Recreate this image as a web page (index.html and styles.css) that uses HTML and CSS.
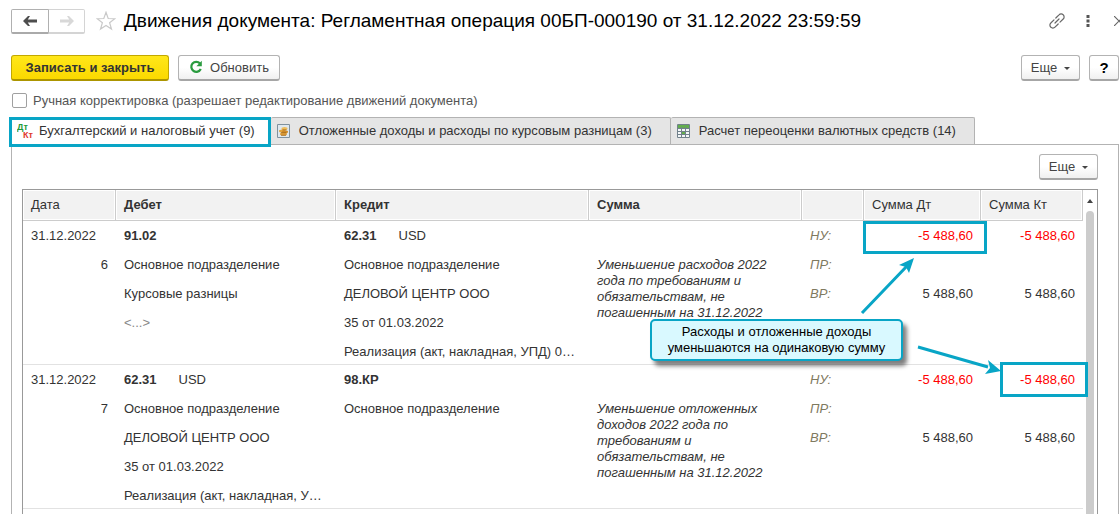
FILE: index.html
```html
<!DOCTYPE html>
<html lang="ru">
<head>
  <meta charset="UTF-8">
  <meta name="viewport" content="width=device-width, initial-scale=1.0">
  <title>Движения документа</title>
  <link rel="stylesheet" href="styles.css">
</head>
<body>
  <header class="titlebar">
    <div class="nav">
      <button type="button" class="nav-btn" aria-label="Назад">
        <svg width="14" height="10" viewBox="0 0 14 10"><path d="M0 5l5-5h2L4.800 3.500H14v3H4.800L7 10H5z" fill="#4d4d4d"/></svg>
      </button>
      <button type="button" class="nav-btn" aria-label="Вперед">
        <svg width="14" height="10" viewBox="0 0 14 10"><path d="M14 5L9 0H7l2.200 3.500H0v3h9.200L7 10h2z" fill="#d8d8d8"/></svg>
      </button>
    </div>
    <button type="button" class="icon-btn star" aria-label="В избранное">
      <svg width="20" height="20" viewBox="0 0 20 20"><path d="M10 1.300l2.200 6.200 6.600.2-5.200 4 1.900 6.400L10 14.400l-5.500 3.700 1.900-6.400-5.200-4 6.600-.2z" fill="#fff" stroke="#c9c9c9" stroke-width="1.200"/></svg>
    </button>
    <h1>Движения документа: Регламентная операция 00БП-000190 от 31.12.2022 23:59:59</h1>
    <div class="window-icons">
      <button type="button" class="icon-btn" aria-label="Ссылка">
        <svg width="16" height="16" viewBox="0 0 16 16" fill="none" stroke="#666" stroke-width="1.200" stroke-linecap="round"><path d="M6.800 5l3.200-3.200a2.900 2.900 0 0 1 4.200 0 2.900 2.900 0 0 1 0 4.200L11 9.200M9.200 11L6 14.200a2.900 2.900 0 0 1-4.200 0 2.900 2.900 0 0 1 0-4.200L5 6.800M6 10l4-4"/></svg>
      </button>
      <button type="button" class="icon-btn" aria-label="Меню">
        <svg width="4" height="12" viewBox="0 0 4 12" fill="#555"><path d="M.5 0h3v3h-3zM.5 4.500h3v3h-3zM.5 9h3v3h-3z"/></svg>
      </button>
      <button type="button" class="icon-btn" aria-label="Закрыть">
        <svg width="10" height="10" viewBox="0 0 10 10" stroke="#666" stroke-width="1.200"><path d="M0 0l10 10M10 0L0 10"/></svg>
      </button>
    </div>
  </header>

  <div class="toolbar">
    <button type="button" class="btn btn-primary">Записать и закрыть</button>
    <button type="button" class="btn btn-refresh">
      <svg width="14" height="14" viewBox="0 0 14 14"><path d="M11 3.400A5 5 0 1 0 11.800 9" fill="none" stroke="#2a9b3f" stroke-width="2.200"/><path d="M12.800.8v5.400H7.400z" fill="#2a9b3f"/></svg>
      Обновить
    </button>
    <button type="button" class="btn btn-more btn-right">Еще <span class="caret"></span></button>
    <button type="button" class="btn btn-help">?</button>
  </div>

  <label class="manual"><input type="checkbox">Ручная корректировка (разрешает редактирование движений документа)</label>

  <nav class="tabs">
    <button type="button" class="tab active">
      <svg width="18" height="18" viewBox="0 0 18 18" class="dtkt"><text x="0" y="8" fill="#1f9a3a">Дт</text><text x="6" y="16" fill="#e0382e">Кт</text></svg>
      Бухгалтерский и налоговый учет (9)
    </button>
    <button type="button" class="tab">
      <svg width="13" height="14" viewBox="0 0 13 14"><path d="M.5.500h12v13H.5z" fill="#dfe8ee" stroke="#7f919e"/><ellipse cx="7.500" cy="4.500" rx="3" ry="1.500" fill="#eebc58"/><ellipse cx="5" cy="7" rx="3" ry="1.500" fill="#e2a43c"/><ellipse cx="8" cy="7.800" rx="3" ry="1.500" fill="#cf8a28"/><ellipse cx="6.500" cy="10" rx="3.500" ry="1.500" fill="#dd9c38"/><path d="M5.500 5.800h4M4 8.600h5M4 11.300h5" stroke="#a3691d" stroke-width=".8"/></svg>
      Отложенные доходы и расходы по курсовым разницам (3)
    </button>
    <button type="button" class="tab">
      <svg width="13" height="14" viewBox="0 0 13 14"><path d="M.5.500h12v13H.5z" fill="#f4f7f8" stroke="#71818b"/><path d="M1 1h11v3H1zM5 8h3v2H5z" fill="#63ad4e"/><path d="M1 4.500h11M1 7.500h11M1 10.500h11M4.500 3v10M8.500 3v10" stroke="#71818b"/></svg>
      Расчет переоценки валютных средств (14)
    </button>
  </nav>

  <main class="panel">
    <div class="panel-bar">
      <button type="button" class="btn btn-more">Еще <span class="caret"></span></button>
    </div>
    <div class="grid">
      <table>
        <colgroup>
          <col class="c-date"><col class="c-debit"><col class="c-credit"><col class="c-sum"><col class="c-kind"><col class="c-dt"><col class="c-kt">
        </colgroup>
        <thead>
          <tr>
            <th class="light">Дата</th>
            <th>Дебет</th>
            <th>Кредит</th>
            <th>Сумма</th>
            <th></th>
            <th class="light">Сумма Дт</th>
            <th class="light">Сумма Кт</th>
          </tr>
        </thead>
        <tbody>
          <tr>
            <td><div class="lines"><span>31.12.2022</span><span class="num">6</span></div></td>
            <td><div class="lines"><span><b>91.02</b></span><span>Основное подразделение</span><span>Курсовые разницы</span><span class="empty">&lt;...&gt;</span></div></td>
            <td><div class="lines"><span><b>62.31</b><i class="cur">USD</i></span><span>Основное подразделение</span><span>ДЕЛОВОЙ ЦЕНТР ООО</span><span>35 от 01.03.2022</span><span>Реализация (акт, накладная, УПД) 0…</span></div></td>
            <td><p class="note">Уменьшение расходов 2022<br>года по требованиям и<br>обязательствам, не<br>погашенным на 31.12.2022</p></td>
            <td><div class="lines kind"><span>НУ:</span><span>ПР:</span><span>ВР:</span></div></td>
            <td class="marked mark-dt"><div class="lines amount"><span class="neg">-5 488,60</span><span></span><span>5 488,60</span></div></td>
            <td><div class="lines amount"><span class="neg">-5 488,60</span><span></span><span>5 488,60</span></div></td>
          </tr>
          <tr>
            <td><div class="lines"><span>31.12.2022</span><span class="num">7</span></div></td>
            <td><div class="lines"><span><b>62.31</b><i class="cur">USD</i></span><span>Основное подразделение</span><span>ДЕЛОВОЙ ЦЕНТР ООО</span><span>35 от 01.03.2022</span><span>Реализация (акт, накладная, У…</span></div></td>
            <td><div class="lines"><span><b>98.КР</b></span><span>Основное подразделение</span></div></td>
            <td><p class="note">Уменьшение отложенных<br>доходов 2022 года по<br>требованиям и<br>обязательствам, не<br>погашенным на 31.12.2022</p></td>
            <td><div class="lines kind"><span>НУ:</span><span>ПР:</span><span>ВР:</span></div></td>
            <td><div class="lines amount"><span class="neg">-5 488,60</span><span></span><span>5 488,60</span></div></td>
            <td class="marked mark-kt"><div class="lines amount"><span class="neg">-5 488,60</span><span></span><span>5 488,60</span></div></td>
          </tr>
        </tbody>
      </table>
      <div class="scrollbar"><span class="scroll-up"></span><span class="thumb"></span></div>

      <svg class="arrows" width="150" height="130" viewBox="0 0 150 130">
        <g stroke="#08a5c6" stroke-width="3" fill="none"><path d="M11 60L56 13M67 94L137 114"/></g>
        <g fill="#08a5c6"><path d="M63 5l-5 15-3-6-7-2z"/><path d="M150 118l-16 3 5-6-2-8z"/></g>
      </svg>
      <div class="callout">Расходы и отложенные доходы<br>уменьшаются на одинаковую сумму</div>
    </div>
  </main>
</body>
</html>
```
FILE: styles.css
```css
*,
*::after {
  box-sizing: border-box;
}

body {
  margin: 0;
  height: 100vh;
  overflow: hidden;
  display: flex;
  flex-direction: column;
  background: #fff;
  color: #333;
  font-family: "Liberation Sans", Arial, sans-serif;
  font-size: 13px;
}

button {
  font: inherit;
  color: inherit;
  padding: 0;
  white-space: nowrap;
}

svg {
  flex: none;
}

/* title */
.titlebar {
  display: flex;
  align-items: center;
  height: 24px;
  margin: 9px 0 22px 11px;
}

.nav {
  display: flex;
}

.nav-btn {
  display: flex;
  align-items: center;
  justify-content: center;
  width: 38px;
  height: 25px;
  background: #fff;
  border: 1px solid #b0b0b0;
  border-bottom: 2px solid #aaa;
  border-radius: 2px 0 0 2px;
}

.nav-btn + .nav-btn {
  width: 37px;
  margin-left: -1px;
  border-color: #d4d4d4;
  border-left-color: #b0b0b0;
  border-radius: 0 2px 2px 0;
}

.icon-btn {
  display: flex;
  border: none;
  background: none;
}

.star {
  margin-left: 11px;
}

h1 {
  margin: 0 0 0 8px;
  color: #000;
  font-size: 19px;
  font-weight: normal;
  line-height: 24px;
  white-space: nowrap;
}

.window-icons {
  display: flex;
  align-items: center;
  gap: 21px;
  margin-left: auto;
  margin-right: -4px;
}

.window-icons .icon-btn:last-child {
  margin-left: 3px;
}

/* buttons */
.toolbar {
  display: flex;
  gap: 9px;
  margin: 0 1px 11px 11px;
}

.btn {
  display: flex;
  align-items: center;
  justify-content: center;
  height: 26px;
  padding-bottom: 1px;
  color: #444;
  background: linear-gradient(#fff 50%, #f0f0f0);
  border: 1px solid #b3b3b3;
  border-bottom: 2px solid #a6a6a6;
  border-radius: 3px;
}

.btn-primary {
  width: 158px;
  color: #333;
  font-weight: bold;
  background: linear-gradient(#ffe71a, #fbd900);
  border-color: #c2a800;
  border-bottom-color: #ac9500;
}

.btn-refresh {
  width: 102px;
  gap: 7px;
}

.btn-more {
  width: 59px;
  gap: 7px;
}

.btn-right {
  margin-left: auto;
}

.btn-help {
  width: 30px;
  color: #000;
  font-size: 15px;
  font-weight: bold;
}

.caret {
  margin-top: 3px;
  border: 3px solid transparent;
  border-top-color: #444;
  border-bottom: none;
}

.manual {
  display: flex;
  align-items: center;
  gap: 6px;
  height: 16px;
  margin: 0 0 9px 12px;
  color: #555;
}

.manual input {
  appearance: none;
  width: 15px;
  height: 15px;
  margin: 0;
  border: 1px solid #a0a0a0;
  border-radius: 2px;
  background: #fff;
}

/* tabs */
.tabs {
  display: flex;
  margin-left: 11px;
}

.tab {
  position: relative;
  display: flex;
  align-items: center;
  gap: 9px;
  height: 27px;
  padding: 0 18px 1px 6px;
  background: #e5e5e5;
  border: 1px solid #b3b3b3;
  border-left: none;
  border-bottom: none;
  border-radius: 2px 2px 0 0;
}

.tab.active {
  gap: 4px;
  padding-right: 15px;
  background: #fff;
}

.tab.active::after {
  content: "";
  position: absolute;
  inset: -1px -1px -3px -2px;
  border: 3px solid #08a5c6;
}

.dtkt {
  font-size: 9px;
  font-weight: bold;
}

/* table */
.panel {
  flex: 1;
  display: flex;
  flex-direction: column;
  margin: 0 1px 0 11px;
  padding: 9px 20px 0 10px;
  border: 1px solid #b3b3b3;
  border-bottom: none;
  min-height: 0;
}

.panel-bar {
  display: flex;
  justify-content: flex-end;
  margin-bottom: 9px;
}

.grid {
  position: relative;
  flex: 1;
  display: flex;
  min-height: 0;
  border: 1px solid #999;
  border-bottom: none;
}

table {
  flex: 1;
  align-self: flex-start;
  width: 100%;
  table-layout: fixed;
  border-collapse: separate;
  border-spacing: 0;
}

.c-date { width: 93px; }
.c-debit { width: 220px; }
.c-credit { width: 253px; }
.c-kind { width: 62px; }
.c-dt { width: 117px; }
.c-kt { width: 102px; }

th {
  height: 31px;
  padding: 0 8px 2px;
  text-align: left;
  background: #f2f2f2;
  border-right: 1px solid #ccc;
  border-bottom: 1px solid #ccc;
  box-shadow: inset 0 0 0 1px #fff;
}

.light {
  font-weight: normal;
}

td {
  height: 144px;
  padding: 2px 8px 0;
  vertical-align: top;
  border-bottom: 1px solid #e2e2e2;
  white-space: nowrap;
}

.lines {
  display: grid;
  grid-auto-rows: 25px;
  gap: 4px;
  line-height: 25px;
}

.num,
.amount {
  text-align: right;
}

.cur {
  margin-left: 22px;
  font-style: normal;
}

.empty {
  color: #888;
}

.kind {
  color: #7f7a5f;
  font-style: italic;
}

.neg {
  color: #f00;
}

.note {
  margin: 34px 0 0;
  font-style: italic;
  line-height: 16px;
}

.scrollbar {
  display: flex;
  flex-direction: column;
  align-items: center;
  width: 14px;
}

.scroll-up {
  margin: 9px 0 8px;
  border: 3px solid transparent;
  border-top: none;
  border-bottom: 4px solid #444;
}

.thumb {
  flex: 1;
  width: 8px;
  background: #ccc;
  border-radius: 4px 4px 0 0;
}

/* highlights over the table */
.marked {
  position: relative;
}

.marked::after {
  content: "";
  position: absolute;
  border: 3px solid #08a5c6;
}

.mark-dt::after {
  inset: 0 -6px auto -1px;
  height: 33px;
}

.mark-kt::after {
  inset: -3px -5px auto 19px;
  height: 35px;
}

.arrows {
  position: absolute;
  top: 63px;
  right: 96px;
}

.callout {
  position: absolute;
  top: 129px;
  right: 194px;
  width: 253px;
  padding: 3px 0;
  color: #000;
  text-align: center;
  line-height: 16px;
  background: #d9f9ff;
  border: 2px solid #08a5c6;
  border-radius: 5px;
  box-shadow: 4px 5px 4px rgba(0, 0, 0, 0.5);
}
```
